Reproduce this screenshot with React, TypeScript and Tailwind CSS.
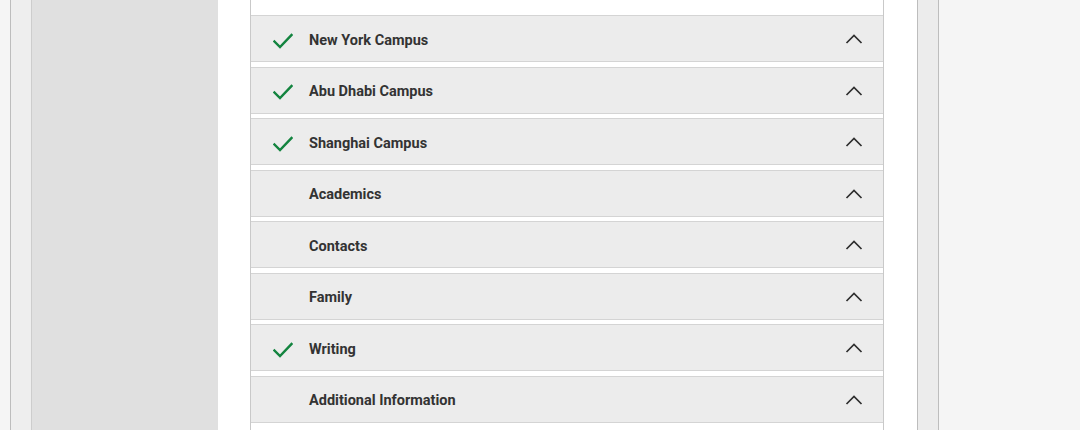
const sections: Array<{ label: string; done: boolean }> = [
  { label: 'New York Campus', done: true },
  { label: 'Abu Dhabi Campus', done: true },
  { label: 'Shanghai Campus', done: true },
  { label: 'Academics', done: false },
  { label: 'Contacts', done: false },
  { label: 'Family', done: false },
  { label: 'Writing', done: true },
  { label: 'Additional Information', done: false },
];

function Check() {
  return (
    <svg width="20" height="16" viewBox="0 0 20 16" fill="none">
      <path d="M1.5 8.5 L7 14 L18.5 2" stroke="#13843f" strokeWidth="2.4" strokeLinecap="square" />
    </svg>
  );
}

function ChevronUp() {
  return (
    <svg width="18" height="10" viewBox="0 0 18 10" fill="none" className="-mt-[3px]">
      <path d="M1.5 9 L9 1.5 L16.5 9" stroke="#2e2e2e" strokeWidth="1.7" />
    </svg>
  );
}

export default function App() {
  return (
    <div
      className="flex h-[430px] w-[1080px] overflow-hidden bg-white"
      style={{ fontFamily: 'Roboto, "Liberation Sans", sans-serif' }}
    >
      {/* Left rails */}
      <div className="w-[10px] bg-[#f5f5f5]" />
      <div className="w-[22px] border-l border-r border-l-[#bdbdbd] border-r-[#cdcdcd] bg-[#eeeeee]" />
      <div className="w-[186px] bg-[#e0e0e0]" />

      {/* Main column */}
      <div className="w-[699px] bg-white pl-[32px]">
        <div className="h-full w-[634px] border-l border-r border-[#c9c9c9] bg-white pt-[15px]">
          <div className="flex flex-col gap-[4.5px]">
            {sections.map(({ label, done }) => (
              <div
                key={label}
                className="flex h-[47px] items-center border-t border-b border-[#d4d4d4] bg-[#ececec] pl-[22px] pr-[20px] pt-[4px]"
              >
                <div className="flex w-[36px] items-center">{done && <Check />}</div>
                <span className="flex-1 text-[14.5px] font-bold text-[#333333]">{label}</span>
                <ChevronUp />
              </div>
            ))}
          </div>
        </div>
      </div>

      {/* Right rails */}
      <div className="w-[22px] border-l border-r border-l-[#bdbdbd] border-r-[#bdbdbd] bg-[#ececec]" />
      <div className="flex-1 bg-[#f5f5f5]" />
    </div>
  );
}
